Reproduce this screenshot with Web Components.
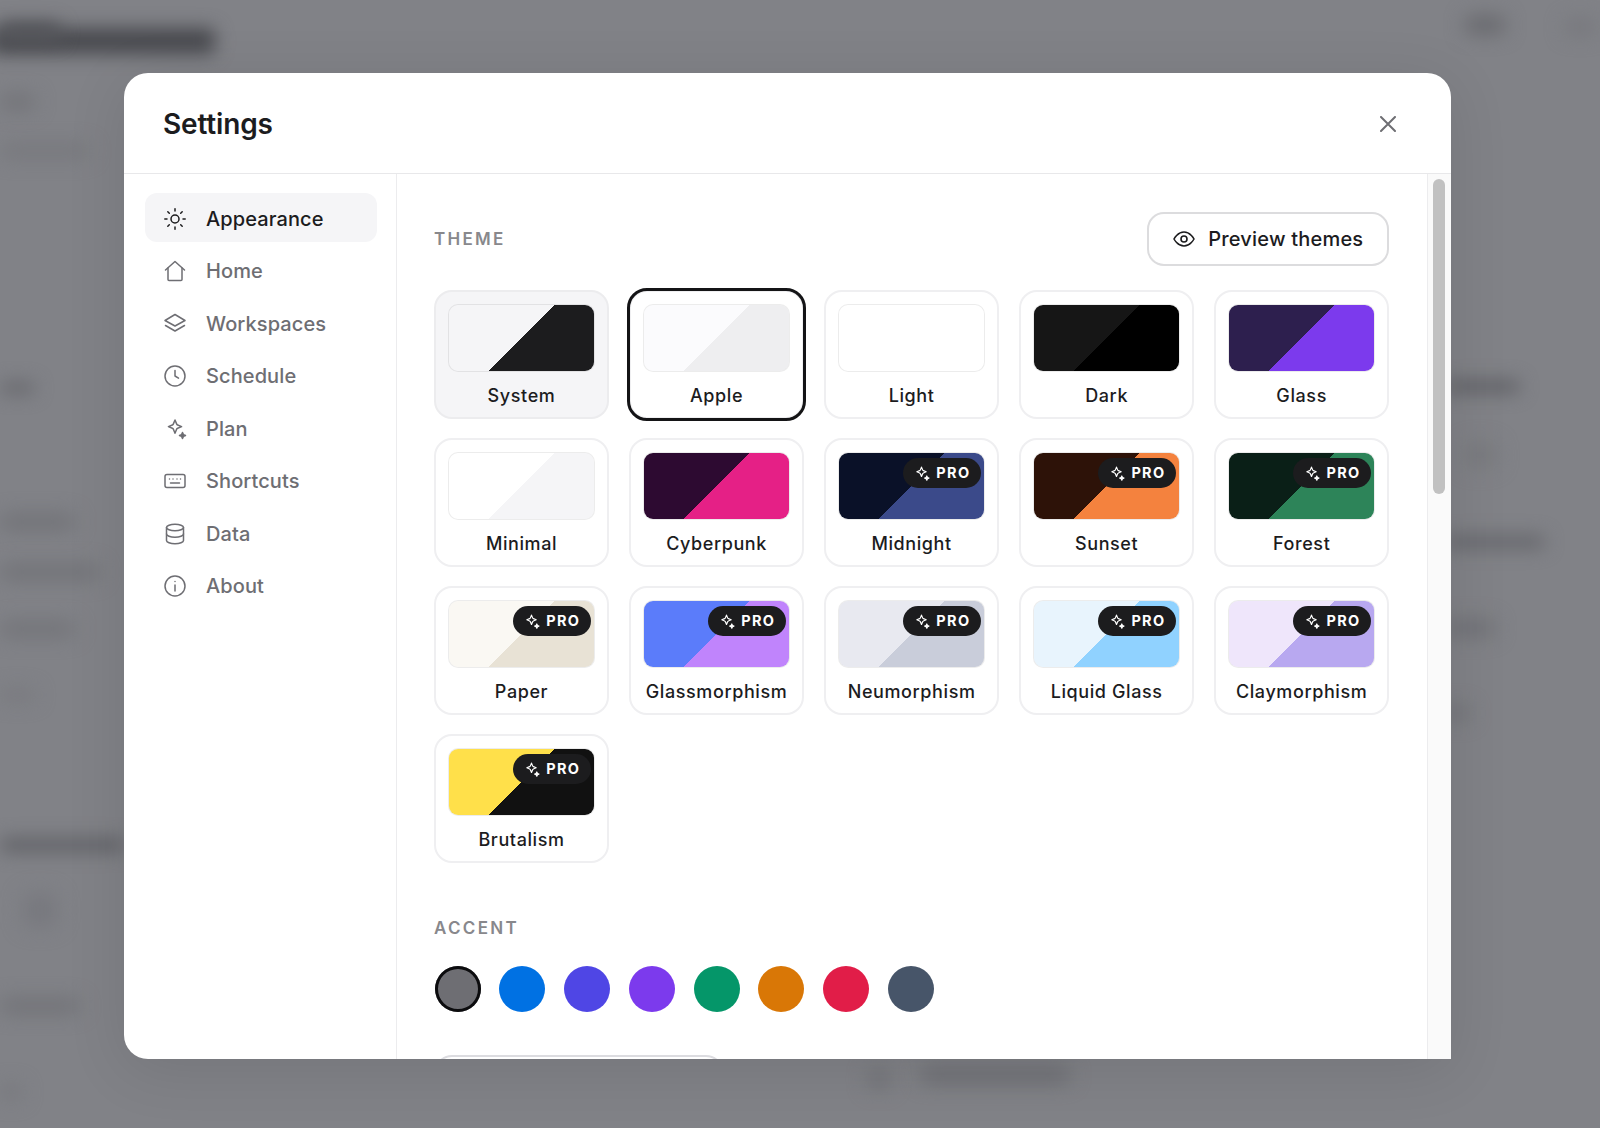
<!DOCTYPE html>
<html lang="en"><head><meta charset="utf-8"><title>Settings</title>
<style>
html,body{margin:0;padding:0;height:100%;overflow:hidden;background:#818287;font-family:Inter,"Noto Sans",sans-serif}
</style></head>
<body>
<app-backdrop></app-backdrop>
<settings-dialog>
  <nav-item slot="nav" icon="sun" active>Appearance</nav-item>
  <nav-item slot="nav" icon="home">Home</nav-item>
  <nav-item slot="nav" icon="layers">Workspaces</nav-item>
  <nav-item slot="nav" icon="clock">Schedule</nav-item>
  <nav-item slot="nav" icon="spark">Plan</nav-item>
  <nav-item slot="nav" icon="keyboard">Shortcuts</nav-item>
  <nav-item slot="nav" icon="db">Data</nav-item>
  <nav-item slot="nav" icon="info">About</nav-item>

  <theme-card a="#f5f5f7" b="#1c1c1e" hover>System</theme-card>
  <theme-card a="#fbfbfd" b="#eeeef0" selected>Apple</theme-card>
  <theme-card a="#fff" b="#fff">Light</theme-card>
  <theme-card a="#161616" b="#000">Dark</theme-card>
  <theme-card a="#2d1f4e" b="#7c3aed">Glass</theme-card>
  <theme-card a="#fff" b="#f5f5f7">Minimal</theme-card>
  <theme-card a="#2d0a31" b="#e52086">Cyberpunk</theme-card>
  <theme-card a="#0a1128" b="#3b4a8a" pro>Midnight</theme-card>
  <theme-card a="#2d1208" b="#f4823e" pro>Sunset</theme-card>
  <theme-card a="#0a1f17" b="#2d8459" pro>Forest</theme-card>
  <theme-card a="#faf8f3" b="#e8e2d5" pro>Paper</theme-card>
  <theme-card a="#5b7cfa" b="#c084fc" pro>Glassmorphism</theme-card>
  <theme-card a="#e8e9f0" b="#c9cdda" pro>Neumorphism</theme-card>
  <theme-card a="#e8f4fd" b="#90d2ff" pro>Liquid Glass</theme-card>
  <theme-card a="#efe6fb" b="#b8a8f0" pro>Claymorphism</theme-card>
  <theme-card a="#ffe04a" b="#111" pro>Brutalism</theme-card>

  <accent-dot slot="accent" color="#6e6e73" selected></accent-dot>
  <accent-dot slot="accent" color="#0071e3"></accent-dot>
  <accent-dot slot="accent" color="#4f46e5"></accent-dot>
  <accent-dot slot="accent" color="#7c3aed"></accent-dot>
  <accent-dot slot="accent" color="#059669"></accent-dot>
  <accent-dot slot="accent" color="#d97706"></accent-dot>
  <accent-dot slot="accent" color="#e11d48"></accent-dot>
  <accent-dot slot="accent" color="#475569"></accent-dot>
</settings-dialog>

<script>
const ICONS={
 sun:'<circle cx="12" cy="12" r="4"/><path d="M12 1.800v2.200M12 20v2.200M1.800 12H4M20 12h2.200M4.800 4.800l1.500 1.500M17.700 17.700l1.500 1.500M4.800 19.200l1.500-1.500M17.700 6.300l1.500-1.500"/>',
 home:'<path d="M2.500 11 12 2.500l9.500 8.500"/><path d="M5 9v11.500a1 1 0 0 0 1 1h12a1 1 0 0 0 1-1V9"/>',
 layers:'<path d="M12 2.500 22 8.500 12 14 2 8.500z"/><path d="M2.500 13.500l9.500 5.500 9.500-5.500"/>',
 clock:'<circle cx="12" cy="12" r="10"/><path d="M12 6.500V12l3.500 2.200"/>',
 spark:'<path d="M12 3l1.600 3.900a2 2 0 0 0 1.100 1.100L18.600 9.600l-3.900 1.600a2 2 0 0 0-1.100 1.100L12 16.200l-1.600-3.900a2 2 0 0 0-1.100-1.100L5.400 9.600 9.300 8a2 2 0 0 0 1.100-1.100z"/><path d="M19.500 15.500l.9 2.100 2.100.9-2.100.9-.9 2.100-.9-2.100-2.100-.9 2.100-.9z" fill="currentColor"/>',
 keyboard:'<rect x="2" y="5.500" width="20" height="13" rx="2"/><path d="M6.500 10h.01M10 10h.01M14 10h.01M17.500 10h.01M7.500 14h9"/>',
 db:'<ellipse cx="12" cy="5.500" rx="8.500" ry="3.200"/><path d="M3.500 5.500v13c0 1.800 3.800 3.200 8.500 3.200s8.500-1.400 8.500-3.200v-13"/><path d="M3.500 12c0 1.800 3.800 3.200 8.500 3.200s8.500-1.400 8.500-3.200"/>',
 info:'<circle cx="12" cy="12" r="10"/><path d="M12 11v6M12 7.500h.01"/>'
};

class NavItem extends HTMLElement{
 connectedCallback(){
  if(this.shadowRoot)return;
  this.attachShadow({mode:'open'}).innerHTML=`<style>
  :host{display:flex;align-items:center;box-sizing:border-box;height:49px;margin-bottom:3.500px;padding:3px 0 0 18px;gap:19.500px;border-radius:12px;color:#6e6e73;font:500 20px/1 Inter,sans-serif;letter-spacing:.1px}
  :host([active]){background:#f5f5f7;color:#1c1c1e}
  svg{width:24px;height:24px;flex:none;fill:none;stroke:currentColor;stroke-width:1.500;stroke-linecap:round;stroke-linejoin:round}
  </style><svg viewBox="0 0 24 24">${ICONS[this.getAttribute('icon')]}</svg><slot></slot>`;
 }
}
customElements.define('nav-item',NavItem);

class ProBadge extends HTMLElement{
 constructor(){super();this.attachShadow({mode:'open'}).innerHTML=`<style>
  :host{position:absolute;top:5px;right:3px;display:flex;align-items:center;justify-content:center;gap:6px;width:78.500px;height:30px;border-radius:15px;background:#1c1c1e;color:#fff;font:700 14.500px/1 Inter,sans-serif;letter-spacing:1.300px}
  svg{width:17px;height:17px;fill:none;stroke:#fff;stroke-width:1.700;stroke-linejoin:round}
  </style><svg viewBox="0 0 24 24">${ICONS.spark}</svg><span>PRO</span>`}
}
customElements.define('pro-badge',ProBadge);

class ThemeCard extends HTMLElement{
 connectedCallback(){
  if(this.shadowRoot)return;
  const a=this.getAttribute('a'),b=this.getAttribute('b');
  this.attachShadow({mode:'open'}).innerHTML=`<style>
  :host{display:flex;flex-direction:column;box-sizing:border-box;height:129px;padding:12px 12px 0;border:2px solid #efeff1;border-radius:18px;background:#fff;color:#1c1c1e;font:500 18px/1 Inter,sans-serif;letter-spacing:.6px;text-align:center}
  :host([hover]){background:#f5f5f7;border-color:#ececee}
  :host([selected]){outline:3px solid #141416;outline-offset:-1px}
  .sw{position:relative;box-sizing:border-box;height:68px;border:1.500px solid rgba(0,0,0,.075);border-radius:10px;background:linear-gradient(135deg,${a} 50%,${b} 50%) padding-box}
  .l{margin-top:15px;white-space:nowrap}
  </style><div class="sw">${this.hasAttribute('pro')?'<pro-badge></pro-badge>':''}</div><div class="l"><slot></slot></div>`;
 }
}
customElements.define('theme-card',ThemeCard);

class AccentDot extends HTMLElement{
 connectedCallback(){
  if(this.shadowRoot)return;
  this.attachShadow({mode:'open'}).innerHTML=`<style>
  :host{display:block;box-sizing:border-box;width:46px;height:46px;border-radius:50%;background:${this.getAttribute('color')}}
  :host([selected]){box-shadow:inset 0 0 0 3px #0c0c0e}
  </style>`;
 }
}
customElements.define('accent-dot',AccentDot);

class AppBackdrop extends HTMLElement{
 constructor(){super();
  const blobs=[[-10,28,225,26,'#48494e',9],[0,22,60,20,'#55565b',9],[0,95,35,14,'#6f7075',10],[0,145,90,12,'#74757a',10],[0,382,35,12,'#66676c',9],[0,515,75,14,'#6e6f74',10],[0,565,100,14,'#6e6f74',10],[0,622,75,14,'#707176',10],[0,690,35,10,'#75767b',10],[0,838,125,14,'#606166',9],[25,895,30,30,'#75767c',11],[0,1000,80,12,'#6c6d72',10],[0,1085,22,14,'#75767b',10],[1445,380,75,13,'#5f6065',9],[1465,445,30,20,'#75767b',11],[1445,535,100,14,'#66676c',9],[1445,620,50,16,'#6e6f74',10],[1445,706,25,14,'#6e6f74',10],[1465,17,40,16,'#64656a',10],[1565,20,30,14,'#74757a',10],[920,1068,150,14,'#6a6b70',10],[868,1070,22,18,'#707176',10]];
  this.attachShadow({mode:'open'}).innerHTML=`<style>
  :host{position:fixed;inset:0;display:block;overflow:hidden;background:#818287}
  i{position:absolute;display:block;border-radius:6px}
  </style>`+blobs.map(b=>`<i style="left:${b[0]}px;top:${b[1]}px;width:${b[2]}px;height:${b[3]}px;background:${b[4]};filter:blur(${b[5]}px)"></i>`).join('');
 }
}
customElements.define('app-backdrop',AppBackdrop);

class SettingsDialog extends HTMLElement{
 constructor(){super();
  this.attachShadow({mode:'open'}).innerHTML=`<style>
  :host{position:fixed;left:124px;top:73px;width:1327px;height:986px;display:flex;flex-direction:column;background:#fff;border-radius:24px 24px 0 24px;box-shadow:0 10px 60px rgba(0,0,0,.1);color:#1c1c1e;overflow:hidden}
  header{display:flex;flex:none;align-items:center;justify-content:space-between;box-sizing:border-box;height:100.500px;padding:2px 55px 0 39px;border-bottom:1.500px solid #e8e8ea}
  h1{margin:0;font:600 28px/1 Inter,sans-serif;letter-spacing:-.15px}
  .x{width:16px;height:16px;fill:none;stroke:#6e6e73;stroke-width:2;stroke-linecap:round}
  .body{flex:1;display:flex;min-height:0}
  nav{flex:none;box-sizing:border-box;width:273px;padding:19px 19px 0 20.500px;border-right:1.500px solid #ececee}
  main{flex:1;min-width:0;overflow:hidden;padding:38.500px 37.800px 0 37px}
  .row{display:flex;align-items:center;justify-content:space-between;height:54px}
  .lab{font:600 17px/1 Inter,sans-serif;letter-spacing:2.300px;color:#88888c}
  .row .lab{padding-top:1px}
  button{display:flex;align-items:center;gap:12px;box-sizing:border-box;width:242.500px;height:54px;padding:0 0 0 23.500px;border:2px solid #dcdcde;border-radius:17px;background:#fff;color:#1c1c1e;font:500 20px/1 Inter,sans-serif;letter-spacing:.2px}
  button svg{width:24px;height:24px;fill:none;stroke:currentColor;stroke-width:1.600;stroke-linecap:round;stroke-linejoin:round}
  .grid{display:grid;grid-template-columns:repeat(5,1fr);gap:19px 20px;margin-top:24px}
  .acc{margin-top:57px}
  .dots{display:flex;gap:18.750px;margin-top:29px;padding-left:.5px}
  .next{box-sizing:border-box;width:290px;height:60px;margin-top:43px;border:2px solid #dcdce0;border-radius:18px}
  .track{flex:none;box-sizing:border-box;width:24px;padding:5px 6px 0 5px;background:#fafafa;border-left:1.500px solid #ececee}
  .thumb{height:315px;border-radius:6px;background:#c1c1c1}
  </style>
  <header><h1>Settings</h1><svg class="x" viewBox="0 0 16 16"><path d="M1 1l14 14M15 1 1 15"/></svg></header>
  <div class="body">
   <nav><slot name="nav"></slot></nav>
   <main>
    <div class="row"><span class="lab">THEME</span><button><svg viewBox="0 0 24 24"><path d="M2 12s3.600-7 10-7 10 7 10 7-3.600 7-10 7-10-7-10-7z"/><circle cx="12" cy="12" r="3"/></svg>Preview themes</button></div>
    <div class="grid"><slot></slot></div>
    <div class="acc lab">ACCENT</div>
    <div class="dots"><slot name="accent"></slot></div>
    <div class="next"></div>
   </main>
   <div class="track"><div class="thumb"></div></div>
  </div>`;
 }
}
customElements.define('settings-dialog',SettingsDialog);
</script>
</body></html>
